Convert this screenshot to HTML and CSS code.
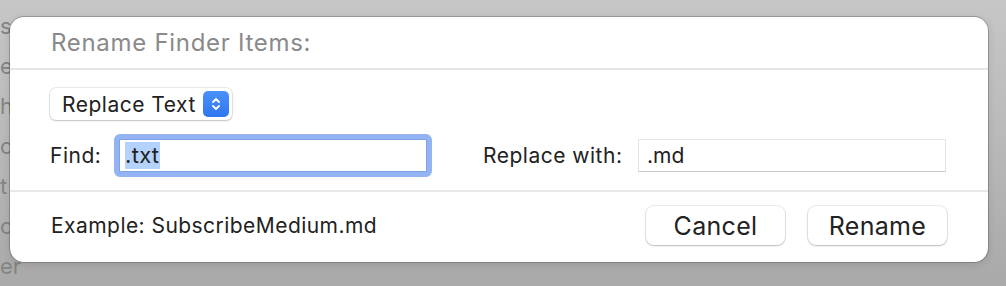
FILE: index.html
```html
<!DOCTYPE html>
<html lang="en">
<head>
    <meta charset="UTF-8">
    <title>Rename Finder Items</title>
    <link rel="stylesheet" href="styles.css">
</head>
<body>
    <div class="backdrop">
        <div class="backdrop-line">s</div>
        <div class="backdrop-line">es</div>
        <div class="backdrop-line">he</div>
        <div class="backdrop-line">ol</div>
        <div class="backdrop-line">t</div>
        <div class="backdrop-line">c</div>
        <div class="backdrop-line">er</div>
    </div>

    <div class="dialog">
        <div class="dialog-header">Rename Finder Items:</div>

        <div class="dialog-body">
            <div class="popup">
                <span>Replace Text</span>
                <span class="stepper">
                    <svg width="12" height="16" viewBox="0 0 12 16">
                        <path d="M3 6 L6 3 L9 6 M3 10 L6 13 L9 10" fill="none" stroke="#fff" stroke-width="1.8" stroke-linecap="round" stroke-linejoin="round"/>
                    </svg>
                </span>
            </div>

            <div class="field-row">
                <label class="find-label">Find:</label>
                <div class="find-ring">
                    <div class="find-field"><span class="selected">.txt</span></div>
                </div>
                <label class="replace-label">Replace with:</label>
                <div class="replace-field">.md</div>
            </div>
        </div>

        <div class="dialog-footer">
            <div class="example">Example: SubscribeMedium.md</div>
            <div class="buttons">
                <button class="btn">Cancel</button>
                <button class="btn">Rename</button>
            </div>
        </div>
    </div>
</body>
</html>
```

FILE: styles.css
```css
body {
    margin: 0;
    width: 1006px;
    height: 286px;
    overflow: hidden;
    font-family: 'Inter', 'Liberation Sans', sans-serif;
    background: linear-gradient(to bottom, #c6c6c6, #bcbcbc 40%, #a9a9a9);
    position: relative;
}

/* window content peeking out behind the sheet */
.backdrop {
    padding-top: 6px;
}

.backdrop-line {
    height: 40px;
    line-height: 40px;
    font-size: 22px;
    color: #848484;
}

.dialog {
    position: absolute;
    left: 10px;
    top: 17px;
    width: 978px;
    height: 245px;
    background: #fff;
    border-radius: 14px;
    box-shadow: 0 0 0 1px rgba(0, 0, 0, 0.2), 0 2px 8px rgba(0, 0, 0, 0.12);
    display: flex;
    flex-direction: column;
}

.dialog-header {
    height: 53px;
    box-sizing: border-box;
    padding-left: 41px;
    display: flex;
    align-items: center;
    font-size: 24px;
    letter-spacing: 0.7px;
    color: #8a8a8a;
    border-bottom: 2px solid #e6e6e6;
}

.dialog-body {
    padding: 18px 42px 13px 40px;
    border-bottom: 2px solid #e8e8e8;
}

.popup {
    display: inline-flex;
    align-items: center;
    justify-content: space-between;
    height: 32px;
    width: 182px;
    box-sizing: border-box;
    padding: 0 3px 0 12px;
    border-radius: 6px;
    background: #fff;
    box-shadow: 0 0 0 1px rgba(0, 0, 0, 0.08), 0 1px 2px rgba(0, 0, 0, 0.18);
    font-size: 21px;
    letter-spacing: 0.5px;
    color: #222;
}

.stepper {
    width: 26px;
    height: 26px;
    border-radius: 5px;
    background: linear-gradient(to bottom, #4b91f9, #2f76f0);
    display: flex;
    align-items: center;
    justify-content: center;
}

.field-row {
    display: flex;
    align-items: center;
    margin-top: 14px;
    font-size: 21px;
    letter-spacing: 0.5px;
    color: #222;
}

.find-label {
    width: 64px;
}

.find-ring {
    width: 318px;
    height: 43px;
    box-sizing: border-box;
    border: 5px solid #93b3f3;
    border-radius: 6px;
    background: #fff;
}

.find-field {
    height: 100%;
    box-sizing: border-box;
    border: 1px solid #7fa3ea;
    padding: 2px 0 0 5px;
    font-size: 22px;
    letter-spacing: 0.3px;
    line-height: 27px;
}

.selected {
    background: #b4d2fc;
    display: inline-block;
    padding-right: 1px;
}

.replace-label {
    margin-left: 51px;
    width: 155px;
}

.replace-field {
    width: 308px;
    height: 33px;
    box-sizing: border-box;
    border: 1px solid #e4e4e4;
    border-bottom-color: #c9c9c9;
    padding-left: 8px;
    font-size: 21px;
    letter-spacing: 0;
    line-height: 31px;
}

.dialog-footer {
    flex: 1;
    display: flex;
    align-items: center;
    justify-content: space-between;
    padding: 0 41px 3px 41px;
}

.example {
    font-size: 21px;
    letter-spacing: 0.45px;
    color: #222;
}

.buttons {
    display: flex;
    gap: 23px;
}

.btn {
    width: 139px;
    height: 39px;
    border: none;
    border-radius: 8px;
    background: #fff;
    box-shadow: 0 0 0 1px rgba(0, 0, 0, 0.08), 0 1px 2px rgba(0, 0, 0, 0.2);
    font-family: inherit;
    font-size: 25px;
    letter-spacing: 0.3px;
    color: #222;
}
```
